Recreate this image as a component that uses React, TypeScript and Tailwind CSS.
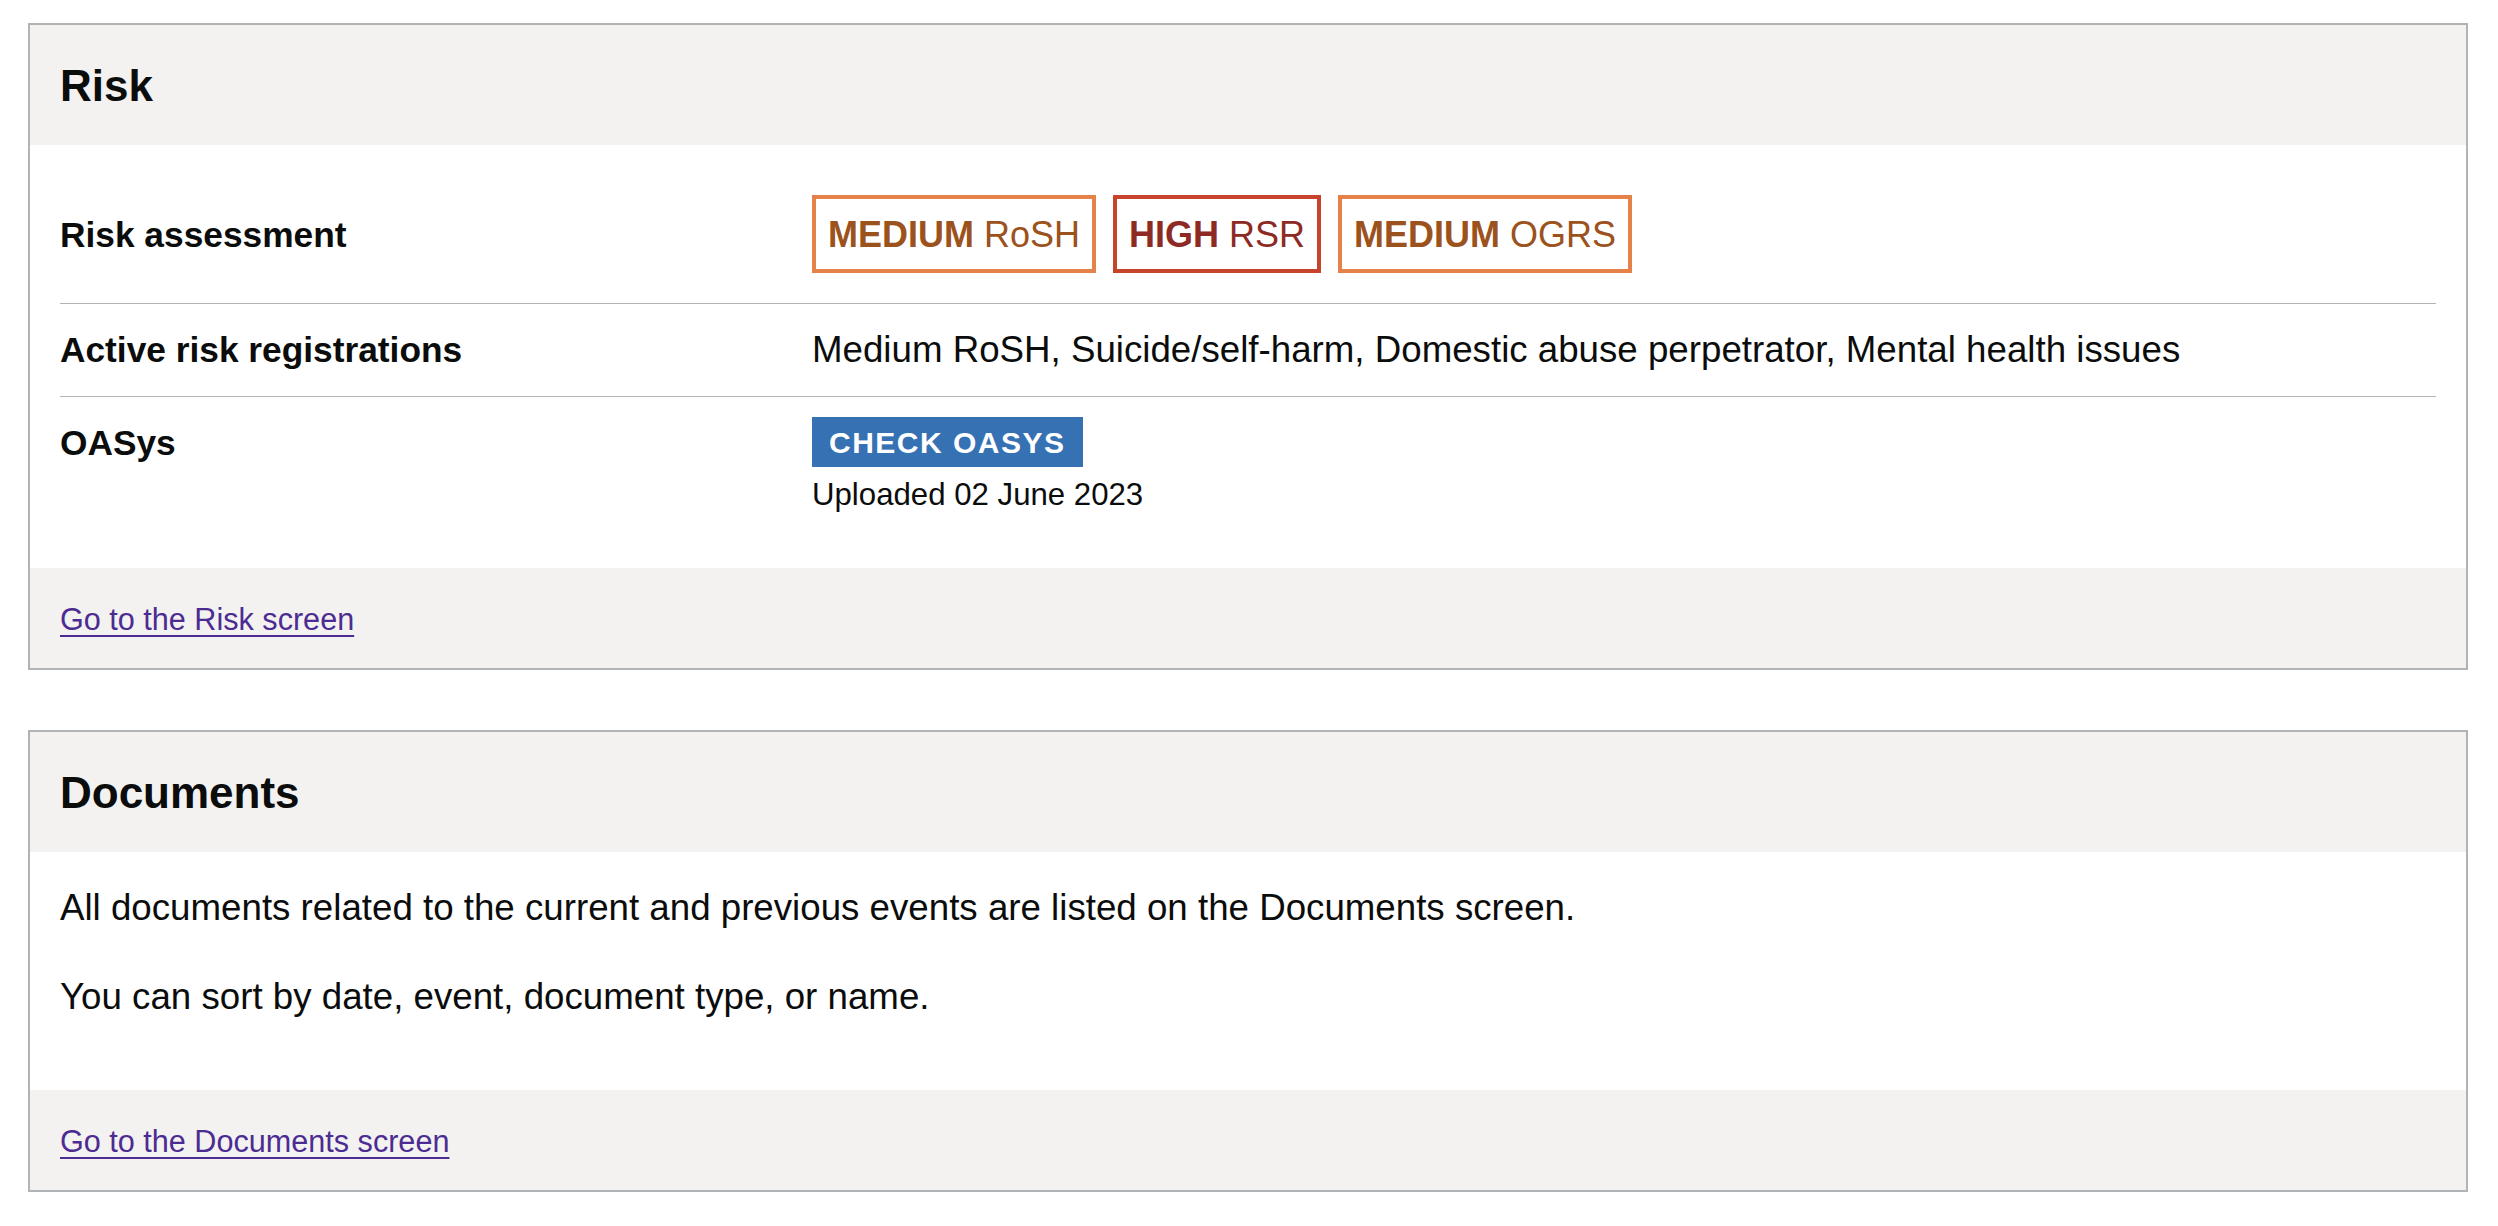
import React from "react";

function Badge({
  level,
  name,
  tone,
}: {
  level: string;
  name: string;
  tone: "medium" | "high";
}) {
  const cls =
    tone === "high"
      ? "border-[#c8432c] text-[#8d2a24]"
      : "border-[#e5824a] text-[#9b521c]";
  return (
    <span
      className={`inline-flex whitespace-nowrap border-4 px-[12px] pt-[14px] pb-[12px] text-[36px] leading-[44px] ${cls}`}
    >
      <span className="font-bold">{level}</span>
      <span>&nbsp;{name}</span>
    </span>
  );
}

function CardHeader({ title }: { title: string }) {
  return (
    <div className="bg-[#f3f2f1] px-[30px] pt-[35px] pb-[33px]">
      <h2 className="text-[44px] font-bold leading-[52px]">{title}</h2>
    </div>
  );
}

function CardFooter({ label }: { label: string }) {
  return (
    <div className="bg-[#f3f2f1] px-[30px] pt-[31px] pb-[29px]">
      <a
        href="#"
        className="text-[30.6px] leading-[40px] text-[#4c2c92] underline decoration-2 underline-offset-[5px]"
      >
        {label}
      </a>
    </div>
  );
}

export default function App() {
  return (
    <div className="min-h-screen bg-white pt-[23px] pl-[28px] font-['Liberation_Sans',Arial,sans-serif] text-[#0b0c0c]">
      <section className="w-[2440px] border-2 border-[#b1b4b6]">
        <CardHeader title="Risk" />
        <div className="bg-white px-[30px] py-[30px]">
          <dl>
            <div className="grid grid-cols-[752px_1fr] border-b border-[#b1b4b6] py-[20px]">
              <dt className="pt-[14px] text-[35.3px] font-bold leading-[52px]">
                Risk assessment
              </dt>
              <dd className="mb-[10px] flex gap-[17px]">
                <Badge level="MEDIUM" name="RoSH" tone="medium" />
                <Badge level="HIGH" name="RSR" tone="high" />
                <Badge level="MEDIUM" name="OGRS" tone="medium" />
              </dd>
            </div>
            <div className="grid grid-cols-[752px_1fr] border-b border-[#b1b4b6] py-[20px]">
              <dt className="text-[35.3px] font-bold leading-[52px]">
                Active risk registrations
              </dt>
              <dd className="text-[36.7px] leading-[52px]">
                Medium RoSH, Suicide/self-harm, Domestic abuse perpetrator,
                Mental health issues
              </dd>
            </div>
            <div className="grid grid-cols-[752px_1fr] py-[20px]">
              <dt className="text-[35.3px] font-bold leading-[52px]">OASys</dt>
              <dd className="flex flex-col items-start">
                <a
                  href="#"
                  className="h-[50px] bg-[#3671b3] px-[17px] pt-[2px] text-[30px] font-bold uppercase leading-[48px] tracking-[1.5px] text-white"
                >
                  Check OASys
                </a>
                <p className="mt-[5px] text-[31.2px] leading-[46px]">
                  Uploaded 02 June 2023
                </p>
              </dd>
            </div>
          </dl>
        </div>
        <CardFooter label="Go to the Risk screen" />
      </section>

      <section className="mt-[60px] w-[2440px] border-2 border-[#b1b4b6]">
        <CardHeader title="Documents" />
        <div className="bg-white px-[30px] py-[30px]">
          <p className="mb-[37px] text-[36.7px] leading-[52px]">
            All documents related to the current and previous events are
            listed on the Documents screen.
          </p>
          <p className="mb-[37px] text-[36.7px] leading-[52px]">
            You can sort by date, event, document type, or name.
          </p>
        </div>
        <CardFooter label="Go to the Documents screen" />
      </section>
    </div>
  );
}
